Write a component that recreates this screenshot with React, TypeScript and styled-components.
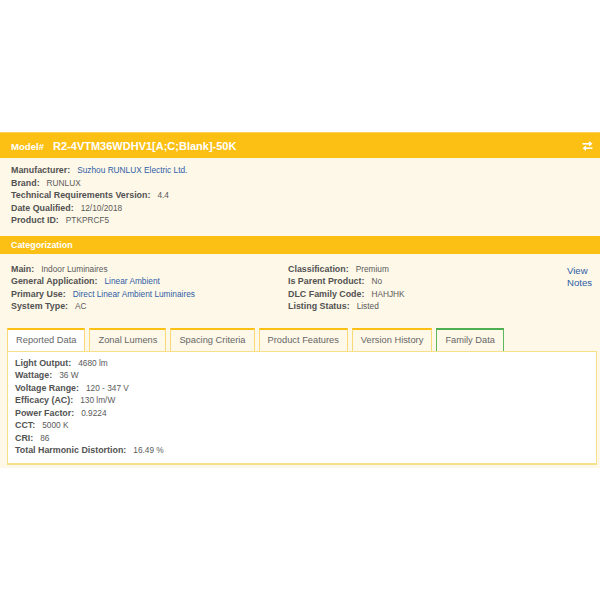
import React from "react";
import styled, { createGlobalStyle } from "styled-components";

const GlobalStyle = createGlobalStyle`
  html, body { margin: 0; padding: 0; background: #ffffff; }
  body { font-family: "Liberation Sans", Arial, sans-serif; }
`;

const YELLOW = "#fcbf14";
const CREAM = "#fef8e8";
const LABEL = "#525252";
const VALUE = "#5a5a5a";
const LINK = "#2f5da6";

const Page = styled.div`
  padding-top: 132px;
`;

const Card = styled.div`
  background: ${CREAM};
  padding-bottom: 3px;
`;

const HeaderBar = styled.div`
  height: 26px;
  background: ${YELLOW};
  border-top: 1px solid #fdd35a;
  box-sizing: border-box;
  display: flex;
  align-items: center;
  justify-content: space-between;
  padding: 0 7px 0 11px;
  color: #ffffff;
`;

const Title = styled.div`
  display: flex;
  align-items: baseline;
  gap: 9px;
  font-weight: bold;
`;

const TitleLabel = styled.span`
  font-size: 9.6px;
`;

const TitleModel = styled.span`
  font-size: 11px;
`;

const InfoBlock = styled.div`
  padding: 6px 11px 9px;
`;

const Row = styled.div`
  display: flex;
  align-items: baseline;
  line-height: 12.5px;
  white-space: nowrap;
`;

const Label = styled.span`
  font-size: 8.9px;
  font-weight: bold;
  color: ${LABEL};
  margin-right: 7px;
`;

const Value = styled.span<{ $link?: boolean }>`
  font-size: 8.3px;
  color: ${(p) => (p.$link ? LINK : VALUE)};
`;

const SectionBar = styled.div`
  height: 18px;
  background: ${YELLOW};
  display: flex;
  align-items: center;
  padding: 0 11px;
  color: #ffffff;
  font-size: 8.9px;
  font-weight: bold;
`;

const CatGrid = styled.div`
  display: grid;
  grid-template-columns: 277px 279px 1fr;
  padding: 9px 0 0 11px;
`;

const Column = styled.div`
  display: flex;
  flex-direction: column;
`;

const Notes = styled.a`
  display: block;
  width: 26px;
  padding-top: 2px;
  font-size: 9.6px;
  line-height: 12.4px;
  color: ${LINK};
  text-decoration: none;
`;

const Tabs = styled.div`
  display: flex;
  gap: 4px;
  margin-top: 15px;
  padding-left: 7px;
`;

const Tab = styled.div<{ $active?: boolean; $green?: boolean }>`
  height: 23px;
  box-sizing: border-box;
  padding: 0 8px;
  display: flex;
  align-items: center;
  font-size: 9.3px;
  color: #666666;
  white-space: nowrap;
  background: ${(p) => (p.$active ? "#ffffff" : CREAM)};
  border: 1px solid ${(p) => (p.$green ? "#5cb85c" : "#f9d977")};
  border-top: 2px solid ${(p) => (p.$green ? "#4caf50" : YELLOW)};
  border-bottom: ${(p) => (p.$active ? "none" : "0")};
  margin-bottom: ${(p) => (p.$active ? "-1px" : "0")};
  position: relative;
  z-index: ${(p) => (p.$active ? 1 : 0)};
`;

const Panel = styled.div`
  margin: 0 3px 0 7px;
  background: #ffffff;
  border: 1px solid #f7e08a;
  border-bottom-width: 2px;
  padding: 5px 7px 6px;
`;

const ExchangeIcon = () => (
  <svg width="11" height="10" viewBox="0 0 11 10" fill="#ffffff">
    <rect x="0.5" y="2" width="7" height="1.6" />
    <polygon points="7,0 10.5,2.8 7,5.6" />
    <rect x="3.5" y="6.4" width="7" height="1.6" />
    <polygon points="4,4.4 0.5,7.2 4,10" />
  </svg>
);

type Item = { label: string; value: string; link?: boolean };

const info: Item[] = [
  { label: "Manufacturer:", value: "Suzhou RUNLUX Electric Ltd.", link: true },
  { label: "Brand:", value: "RUNLUX" },
  { label: "Technical Requirements Version:", value: "4.4" },
  { label: "Date Qualified:", value: "12/10/2018" },
  { label: "Product ID:", value: "PTKPRCF5" },
];

const catLeft: Item[] = [
  { label: "Main:", value: "Indoor Luminaires" },
  { label: "General Application:", value: "Linear Ambient", link: true },
  { label: "Primary Use:", value: "Direct Linear Ambient Luminaires", link: true },
  { label: "System Type:", value: "AC" },
];

const catRight: Item[] = [
  { label: "Classification:", value: "Premium" },
  { label: "Is Parent Product:", value: "No" },
  { label: "DLC Family Code:", value: "HAHJHK" },
  { label: "Listing Status:", value: "Listed" },
];

const reported: Item[] = [
  { label: "Light Output:", value: "4680 lm" },
  { label: "Wattage:", value: "36 W" },
  { label: "Voltage Range:", value: "120 - 347 V" },
  { label: "Efficacy (AC):", value: "130 lm/W" },
  { label: "Power Factor:", value: "0.9224" },
  { label: "CCT:", value: "5000 K" },
  { label: "CRI:", value: "86" },
  { label: "Total Harmonic Distortion:", value: "16.49 %" },
];

const tabs = [
  "Reported Data",
  "Zonal Lumens",
  "Spacing Criteria",
  "Product Features",
  "Version History",
  "Family Data",
];

const Rows = ({ items }: { items: Item[] }) => (
  <>
    {items.map((it) => (
      <Row key={it.label}>
        <Label>{it.label}</Label>
        <Value $link={it.link}>{it.value}</Value>
      </Row>
    ))}
  </>
);

export default function App() {
  return (
    <Page>
      <GlobalStyle />
      <Card>
        <HeaderBar>
          <Title>
            <TitleLabel>Model#</TitleLabel>
            <TitleModel>R2-4VTM36WDHV1[A;C;Blank]-50K</TitleModel>
          </Title>
          <ExchangeIcon />
        </HeaderBar>
        <InfoBlock>
          <Rows items={info} />
        </InfoBlock>
        <SectionBar>Categorization</SectionBar>
        <CatGrid>
          <Column>
            <Rows items={catLeft} />
          </Column>
          <Column>
            <Rows items={catRight} />
          </Column>
          <Column>
            <Notes href="#">View Notes</Notes>
          </Column>
        </CatGrid>
        <Tabs>
          {tabs.map((t, i) => (
            <Tab key={t} $active={i === 0} $green={i === tabs.length - 1}>
              {t}
            </Tab>
          ))}
        </Tabs>
        <Panel>
          <Rows items={reported} />
        </Panel>
      </Card>
    </Page>
  );
}
